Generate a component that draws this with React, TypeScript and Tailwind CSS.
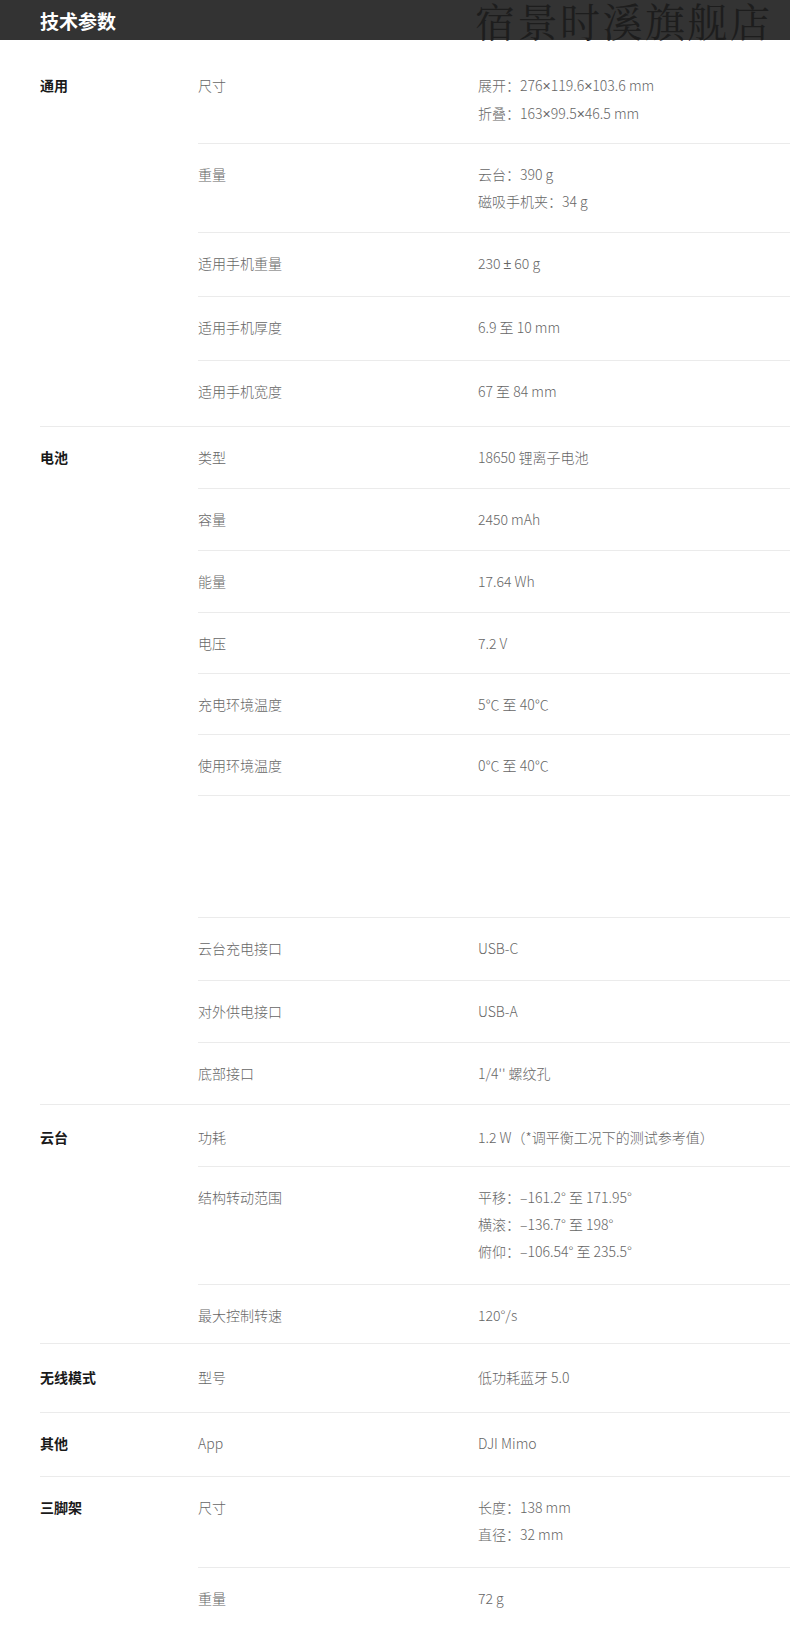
type Row = { name: string; values: string[]; h: string; pt?: string };
type Section = { title: string; rows: Row[] };

const sections: Section[] = [
  {
    title: "通用",
    rows: [
      { name: "尺寸", values: ["展开：276×119.6×103.6 mm", "折叠：163×99.5×46.5 mm"], h: "h-[88px]" },
      { name: "重量", values: ["云台：390 g", "磁吸手机夹：34 g"], h: "h-[89px]" },
      { name: "适用手机重量", values: ["230 ± 60 g"], h: "h-[64px]" },
      { name: "适用手机厚度", values: ["6.9 至 10 mm"], h: "h-[64px]" },
      { name: "适用手机宽度", values: ["67 至 84 mm"], h: "h-[66px]" },
    ],
  },
  {
    title: "电池",
    rows: [
      { name: "类型", values: ["18650 锂离子电池"], h: "h-[61px]" },
      { name: "容量", values: ["2450 mAh"], h: "h-[62px]" },
      { name: "能量", values: ["17.64 Wh"], h: "h-[62px]" },
      { name: "电压", values: ["7.2 V"], h: "h-[61px]" },
      { name: "充电环境温度", values: ["5℃ 至 40℃"], h: "h-[61px]" },
      { name: "使用环境温度", values: ["0℃ 至 40℃"], h: "h-[61px]" },
      { name: "", values: [], h: "h-[122px]" },
      { name: "云台充电接口", values: ["USB-C"], h: "h-[63px]" },
      { name: "对外供电接口", values: ["USB-A"], h: "h-[62px]" },
      { name: "底部接口", values: ["1/4'' 螺纹孔"], h: "h-[62px]" },
    ],
  },
  {
    title: "云台",
    rows: [
      { name: "功耗", values: ["1.2 W（*调平衡工况下的测试参考值）"], h: "h-[61px]", pt: "pt-[19px]" },
      {
        name: "结构转动范围",
        values: ["平移：–161.2° 至 171.95°", "横滚：–136.7° 至 198°", "俯仰：–106.54° 至 235.5°"],
        h: "h-[118px]",
      },
      { name: "最大控制转速", values: ["120°/s"], h: "h-[59px]" },
    ],
  },
  {
    title: "无线模式",
    rows: [{ name: "型号", values: ["低功耗蓝牙 5.0"], h: "h-[68px]", pt: "pt-[20px]" }],
  },
  {
    title: "其他",
    rows: [{ name: "App", values: ["DJI Mimo"], h: "h-[63px]" }],
  },
  {
    title: "三脚架",
    rows: [
      { name: "尺寸", values: ["长度：138 mm", "直径：32 mm"], h: "h-[90px]" },
      { name: "重量", values: ["72 g"], h: "h-[69px]" },
    ],
  },
];

// × and ± are full width in the CJK font, give them a latin one
const Value = ({ text }: { text: string }) => {
  const parts = text.split(/([×±])/);
  return (
    <p>
      {parts.map((p, i) =>
        p === "×" || p === "±" ? (
          <span key={i} className="font-['Liberation_Sans']">
            {p}
          </span>
        ) : (
          p
        )
      )}
    </p>
  );
};

const App = () => {
  return (
    <div className="w-[790px] min-h-[1636px] bg-white font-['Noto_Sans_CJK_SC',sans-serif] overflow-hidden">
      <div className="relative h-[40px] bg-[#333333] flex items-center pl-[40px]">
        <h1 className="text-[19px] font-bold text-white leading-none">技术参数</h1>
        <span className="absolute left-[475px] top-0 h-[40px] text-[40px] leading-[40px] tracking-[2.5px] text-[#1d1d1d] font-['Noto_Serif_CJK_SC','Noto_Sans_CJK_SC',serif] whitespace-nowrap">
          宿景时溪旗舰店
        </span>
      </div>

      <div className="pt-[15px] pl-[40px]">
        {sections.map((section, si) => (
          <div
            key={section.title}
            className={si === 0 ? "flex" : "flex border-t border-[#ebebeb]"}
          >
            <div
              className={
                "w-[158px] shrink-0 text-[14px] leading-[27px] font-bold text-[#1a1a1a] " +
                (section.rows[0].pt ?? "pt-[17px]")
              }
            >
              {section.title}
            </div>
            <div className="flex-1 flex flex-col">
              {section.rows.map((row, ri) => (
                <div
                  key={ri}
                  className={
                    "flex text-[14px] leading-[27px] font-light text-[#666666] " +
                    row.h +
                    " " +
                    (row.pt ?? "pt-[17px]") +
                    (ri === 0 ? "" : " border-t border-[#ebebeb]")
                  }
                >
                  <div className="w-[280px] shrink-0">{row.name}</div>
                  <div className="flex flex-col">
                    {row.values.map((v) => (
                      <Value key={v} text={v} />
                    ))}
                  </div>
                </div>
              ))}
            </div>
          </div>
        ))}
      </div>
    </div>
  );
};

export default App;
